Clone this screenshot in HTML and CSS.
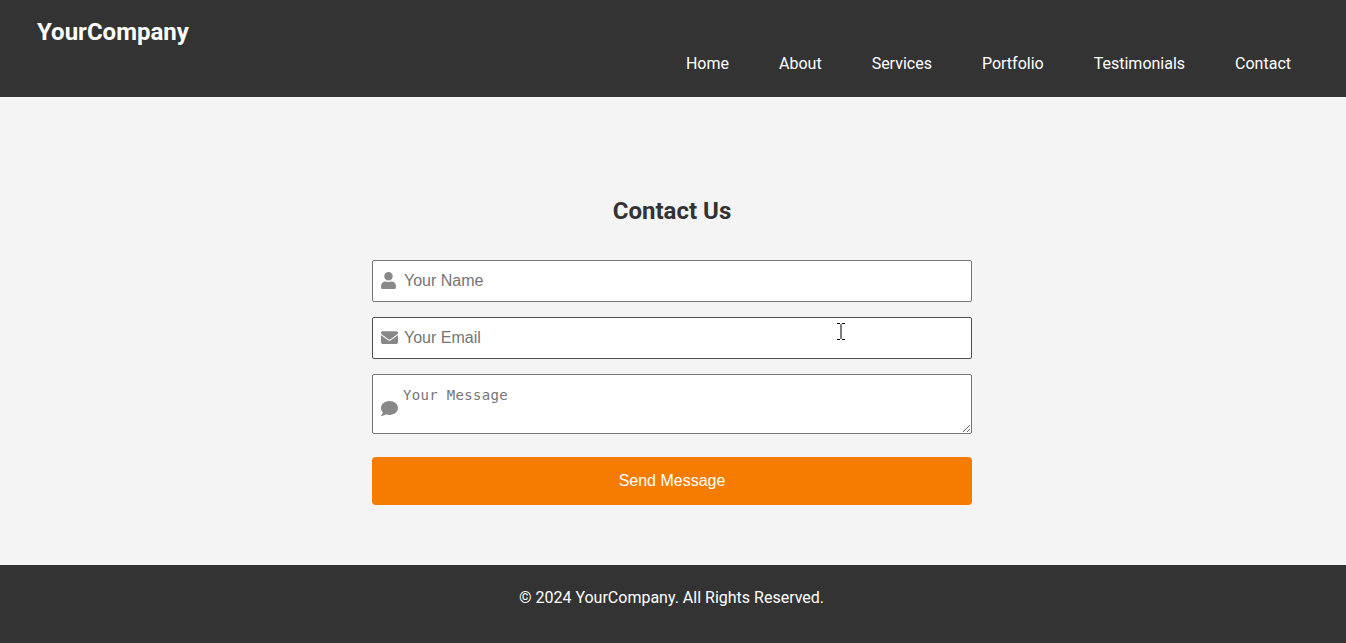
FILE: index.html
```html
<!DOCTYPE html>
<html lang="en">
<head>
<meta charset="utf-8">
<title>Contact Us - YourCompany</title>
<link rel="stylesheet" href="styles.css">
</head>
<body>
<header class="site-header">
  <div class="logo">YourCompany</div>
  <nav class="nav">
    <a href="#">Home</a>
    <a href="#">About</a>
    <a href="#">Services</a>
    <a href="#">Portfolio</a>
    <a href="#">Testimonials</a>
    <a href="#">Contact</a>
  </nav>
</header>

<main class="contact">
  <h2 class="contact-title">Contact Us</h2>
  <form class="contact-form">
    <div class="field">
      <svg class="icon icon-user" viewBox="0 0 448 512"><path d="M224 256c70.7 0 128-57.3 128-128S294.7 0 224 0 96 57.3 96 128s57.3 128 128 128zm89.6 32h-16.7c-22.2 10.2-46.9 16-72.9 16s-50.6-5.8-72.9-16h-16.7C60.2 288 0 348.2 0 422.4V464c0 26.5 21.5 48 48 48h352c26.5 0 48-21.5 48-48v-41.6c0-74.2-60.2-134.4-134.4-134.4z"/></svg>
      <input class="input" type="text" placeholder="Your Name">
    </div>
    <div class="field">
      <svg class="icon icon-mail" viewBox="0 0 512 512"><path d="M502.3 190.8c3.9-3.1 9.7-.2 9.7 4.7V400c0 26.5-21.5 48-48 48H48c-26.5 0-48-21.5-48-48V195.6c0-5 5.7-7.8 9.7-4.7 22.4 17.4 52.1 39.5 154.1 113.6 21.1 15.4 56.7 47.8 92.2 47.6 35.7.3 72-32.8 92.3-47.6 102-74.1 131.6-96.3 154-113.7zM256 320c23.2.4 56.6-29.2 73.4-41.4 132.7-96.3 142.8-104.7 173.4-128.7 5.8-4.5 9.2-11.5 9.2-18.9v-19c0-26.5-21.5-48-48-48H48C21.5 64 0 85.5 0 112v19c0 7.4 3.4 14.3 9.2 18.9 30.6 23.9 40.7 32.4 173.4 128.7 16.8 12.2 50.2 41.8 73.4 41.4z"/></svg>
      <input class="input input-hover" type="email" placeholder="Your Email">
      <svg class="ibeam" viewBox="0 0 8 17"><path d="M0 .5h3M5 .5h3M4 1v15M0 16.5h3M5 16.5h3" fill="none" stroke="#000"/></svg>
    </div>
    <div class="field">
      <svg class="icon icon-msg" viewBox="0 0 512 512"><path d="M256 32C114.6 32 0 125.1 0 240c0 49.6 21.4 95 57 130.7C44.5 421.1 2.7 466 2.2 466.5c-2.2 2.3-2.8 5.7-1.5 8.7S4.8 480 8 480c66.3 0 116-31.8 140.6-51.4 32.7 12.3 69 19.4 107.4 19.4 141.4 0 256-93.1 256-208S397.4 32 256 32z"/></svg>
      <textarea class="input message" placeholder="Your Message"></textarea>
    </div>
    <button class="send" type="button">Send Message</button>
  </form>
</main>

<footer class="site-footer">
  <p>&copy; 2024 YourCompany. All Rights Reserved.</p>
</footer>
</body>
</html>
```

FILE: styles.css
```css
/* Contact page */

* { box-sizing: border-box; }

body
{ margin: 0;
font-family: Roboto, sans-serif;
font-size: 16px;
color: #333;
background-color: #f4f4f4;
}

.site-header
{ display: flex;
justify-content: space-between;
height: 97px;
padding: 0 30px 0 37px;
background-color: #333;
color: #fff;
}

.logo
{ margin-top: 17px;
font-size: 24px;
font-weight: 700;
line-height: 30px;
}

.nav
{ display: flex;
align-self: flex-end;
gap: 50px;
padding: 0 25px 23px 0;
}

.nav a
{ color: #fff;
text-decoration: none;
line-height: 20px;
}

.contact
{ height: 468px;
padding: 100px 2px 0 0;
}

.contact-title
{ margin: 0 0 35px;
text-align: center;
font-size: 24px;
font-weight: 700;
line-height: 28px;
}

.contact-form
{ display: flex;
flex-direction: column;
gap: 15px;
width: 600px;
margin: 0 auto;
}

.field
{ position: relative;
display: flex;
}

.input
{ width: 100%;
height: 42px;
padding: 0 10px 0 31px;
border: 1px solid #767676;
border-radius: 2px;
background-color: #fff;
font-family: "Liberation Sans", Arial, sans-serif;
font-size: 16px;
}

.input-hover
{ border-color: #4f4f4f;
}

.message
{ height: 60px;
padding: 12px 10px 10px 30px;
font-family: "DejaVu Sans Mono", monospace;
font-size: 14px;
letter-spacing: .33px;
}

.icon
{ position: absolute;
left: 9px;
top: 12px;
width: 17px;
height: 17px;
fill: #888;
}

.icon-user { width: 15px; }
.icon-msg { top: 26px; }

.ibeam
{ position: absolute;
left: 465px;
top: 6px;
width: 8px;
height: 17px;
}

.send
{ height: 48px;
margin-top: 8px;
border: 0;
border-radius: 4px;
background-color: #f57c00;
color: #fff;
font-family: "Liberation Sans", Arial, sans-serif;
font-size: 16px;
}

.site-footer
{ height: 78px;
padding: 23px 3px 0 0;
background-color: #333;
color: #fff;
text-align: center;
}

.site-footer p
{ margin: 0;
line-height: 20px;
}
```
